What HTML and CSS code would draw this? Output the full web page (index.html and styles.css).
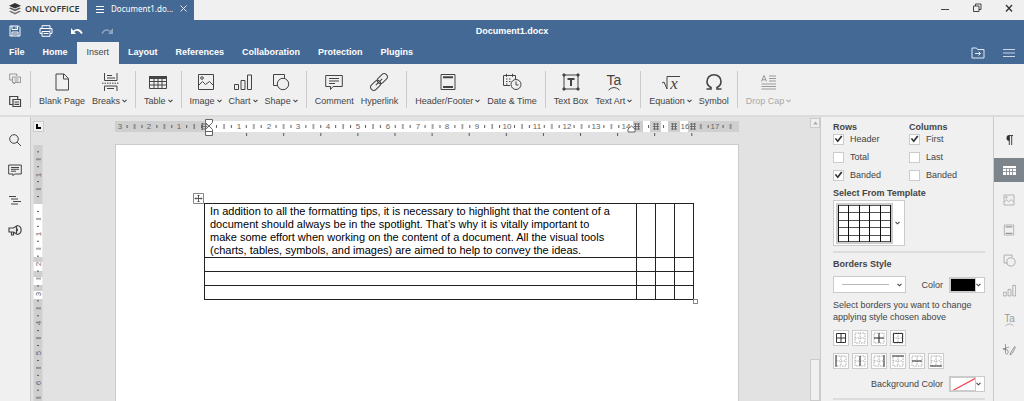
FILE: index.html
```html
<!DOCTYPE html>
<html lang="en">
<head>
    <meta charset="utf-8">
    <title>Document1.docx - ONLYOFFICE</title>
    <link rel="stylesheet" href="styles.css">
</head>
<body>

    <!-- Shared icons -->
    <svg class="sprite" aria-hidden="true">
        <symbol id="chevron" viewBox="0 0 5 4"><path d="M.5.8 2.5 2.8 4.5.8" fill="none" stroke="currentColor" stroke-width="1.1"/></symbol>
        <symbol id="i-image" viewBox="0 0 18 18"><path d="M1.500 1.500h15v15h-15z M1.500 12.500l4-4 3 3 4-3 4 4"/><circle cx="5" cy="5" r="1.300"/></symbol>
        <symbol id="i-chart" viewBox="0 0 18 18"><path d="M.5 11.500h4v5h-4zM7 7.500h4v9H7zM13.500 2h4v14.500h-4z"/></symbol>
        <symbol id="i-shape" viewBox="0 0 18 18"><path d="M6 12.500H1.500v-11h11V5"/><circle cx="11" cy="11" r="5.700"/></symbol>
        <symbol id="i-header" viewBox="0 0 18 18"><path d="M2 1.500h14v15H2z"/><path d="M4 4.200h10M4 14h10" stroke-width="2"/></symbol>
        <symbol id="i-textart" viewBox="0 0 18 18"><text x="9" y="12" text-anchor="middle">Ta</text><path d="M3.500 17q5.500-5 11 0"/></symbol>
        <symbol id="i-comment" viewBox="0 0 18 18"><path d="M.7 2.500h16.600v11H8l-2.500 3v-3H.7zM4 5.500h10M4 8h10M4 10.500h6"/></symbol>
        <symbol id="b-cell" viewBox="0 0 12 12"><path d="M1 1h10v10H1zM6 1v10M1 6h10" fill="none" stroke="#aaa" stroke-dasharray="1.500 1"/></symbol>
    </svg>

    <header>
        <div class="titlebar">
            <div class="brand">
                <svg width="12" height="12" viewBox="0 0 12 12"><path d="M6 0 12 2.800 6 5.600 0 2.800z" fill="#333"/><path d="m0 5.300 1.800-.9L6 6.400l4.200-2 1.800.9-6 2.900z" fill="#555"/><path d="m0 8.600 1.800-.9L6 9.700l4.200-2 1.800.9-6 2.900z" fill="#777"/></svg>
                ONLYOFFICE
            </div>
            <div class="doc-tab">
                <svg width="8" height="8" viewBox="0 0 8 8"><path d="M0 1.500h8M0 4.500h8M0 7.500h8" stroke="#fff"/></svg>
                <span>Document1.do...</span>
                <button aria-label="Close tab"><svg width="7" height="7" viewBox="0 0 7 7"><path d="m.5.5 6 6m0-6-6 6" stroke="#dde5ee"/></svg></button>
            </div>
            <div class="window-buttons">
                <button aria-label="Minimize"><svg width="10" height="10" viewBox="0 0 10 10"><path d="M1 6.500h8" stroke="#444"/></svg></button>
                <button aria-label="Restore"><svg width="10" height="10" viewBox="0 0 10 10"><path d="M1.500 3h5.500v5.500H1.500zM3.500 3V1H9v5.500H7" fill="none" stroke="#444"/></svg></button>
                <button aria-label="Close"><svg width="10" height="10" viewBox="0 0 10 10"><path d="m2 2 6 6.500m0-6.500L2 8.500" stroke="#333" stroke-width="1.300"/></svg></button>
            </div>
        </div>

        <div class="quickbar">
            <button aria-label="Save"><svg width="12" height="12" viewBox="0 0 12 12"><path d="M1 1h8.500L11 2.500V11H1zM3 1v3.500h5.500V1M3 11V7h6v4M7 2v1.500M4 9h4" fill="none" stroke="#fff"/></svg></button>
            <button aria-label="Print"><svg width="14" height="12" viewBox="0 0 14 12"><path d="M3 3.500V.7h8v2.800M3 8.500H1v-5h12v5h-2M3 6.500h8v4.800H3zM4.500 8.500h5M10.500 5h1" fill="none" stroke="#fff"/></svg></button>
            <button aria-label="Undo"><svg width="12" height="8" viewBox="0 0 12 8"><path d="M0 1v6h5z" fill="#fff"/><path d="M2.500 4.500q5-4 8.500 2" fill="none" stroke="#fff" stroke-width="1.800"/></svg></button>
            <button aria-label="Redo" disabled><svg width="12" height="8" viewBox="0 0 12 8"><path d="M12 1v6H7z" fill="#8fa5bf"/><path d="M9.500 4.500Q4.500.5 1 6.500" fill="none" stroke="#8fa5bf" stroke-width="1.500"/></svg></button>
            <h1>Document1.docx</h1>
        </div>

        <nav class="menu">
            <a href="#">File</a>
            <a href="#">Home</a>
            <a href="#" class="active">Insert</a>
            <a href="#">Layout</a>
            <a href="#">References</a>
            <a href="#">Collaboration</a>
            <a href="#">Protection</a>
            <a href="#">Plugins</a>
            <div class="menu-right">
                <button aria-label="Open file location"><svg width="14" height="12" viewBox="0 0 14 12"><path d="M1 11V1h4.500l1 1.500H13V11zM4 6.500h5.500M7.500 4.500l2 2-2 2" fill="none" stroke="#e4eaf1"/></svg></button>
                <button aria-label="View settings"><svg width="12" height="8" viewBox="0 0 12 8"><path d="M0 .5h12M0 4h12M0 7.500h12" stroke="#ccd7e3"/></svg></button>
            </div>
        </nav>
    </header>

    <div class="toolbar">
        <div class="group clipboard">
            <button aria-label="Copy" class="off"><svg class="icon" width="12" height="12" viewBox="0 0 12 12"><path d="M3 7H.7V1h7v2M3.500 4h8v5.500H6l-1 1.500V9.500H3.500zM5.500 6h4M5.500 8h4"/></svg></button>
            <button aria-label="Paste"><svg class="icon" width="12" height="12" viewBox="0 0 12 12"><path d="M3.500 9.500H.7v-8h8V4M3 1.500h3.500M4 4.500h7.500v7H4zM5.500 7H10M5.500 9.300H10" stroke-width="1.200"/></svg></button>
        </div>
        <div class="group">
            <button><svg class="icon" width="18" height="18" viewBox="0 0 18 18"><path d="M3 1h8l4.500 4.500V17H3zM10.500 1v5h5"/></svg><span>Blank Page</span></button>
            <button><svg class="icon" width="18" height="18" viewBox="0 0 18 18"><path d="M3.500 0v7.500H16V0M6 2.500h5M6 5h8M3.500 18v-5H16v5M6 15.500h7"/><path d="M1 10.200h17" stroke-dasharray="1.500 1"/></svg><span>Breaks<svg class="chev"><use href="#chevron"/></svg></span></button>
        </div>
        <div class="group">
            <button><svg class="icon" width="18" height="18" viewBox="0 0 18 18"><path d="M.5 3.500h17v12H.5zM.5 8.500h17M.5 12h17M5 5v10.500M9 5v10.500M13 5v10.500"/><path d="M0 4.500h18" stroke-width="3"/></svg><span>Table<svg class="chev"><use href="#chevron"/></svg></span></button>
        </div>
        <div class="group">
            <button><svg class="icon" width="18" height="18"><use href="#i-image"/></svg><span>Image<svg class="chev"><use href="#chevron"/></svg></span></button>
            <button><svg class="icon" width="18" height="18"><use href="#i-chart"/></svg><span>Chart<svg class="chev"><use href="#chevron"/></svg></span></button>
            <button><svg class="icon" width="18" height="18"><use href="#i-shape"/></svg><span>Shape<svg class="chev"><use href="#chevron"/></svg></span></button>
        </div>
        <div class="group">
            <button><svg class="icon" width="18" height="18"><use href="#i-comment"/></svg><span>Comment</span></button>
            <button><svg class="icon" width="18" height="18" viewBox="0 0 18 18"><g transform="rotate(-45 9 9)"><rect x="-1.500" y="5.800" width="11.500" height="6.400" rx="3.200"/><rect x="8" y="5.800" width="11.500" height="6.400" rx="3.200"/><path d="M4.500 9h9"/></g></svg><span>Hyperlink</span></button>
        </div>
        <div class="group">
            <button><svg class="icon" width="18" height="18"><use href="#i-header"/></svg><span>Header/Footer<svg class="chev"><use href="#chevron"/></svg></span></button>
            <button><svg class="icon" width="20" height="18" viewBox="0 0 20 18"><path d="M8 12.500H1.500v-10h12V6M4.500.8v3M10.500.8v3M4 6h1.500M7 6h1.500M4 8.500h1.500M7 8.500h1.500M4 11h1.500"/><circle cx="14" cy="11.500" r="5"/><path d="M14 8.500v3.500h2.500"/></svg><span>Date &amp; Time</span></button>
        </div>
        <div class="group">
            <button><svg class="icon" width="18" height="18" viewBox="0 0 18 18"><path d="M2 2h14v14H2z"/><path d="M5.500 6h7M9 5.500V13" stroke-width="2"/><path d="M1 1h2v2H1zM15 1h2v2h-2zM1 15h2v2H1zM15 15h2v2h-2z" fill="#444"/></svg><span>Text Box</span></button>
            <button><svg class="icon" width="18" height="18"><use href="#i-textart"/></svg><span>Text Art<svg class="chev"><use href="#chevron"/></svg></span></button>
        </div>
        <div class="group">
            <button><svg class="icon" width="18" height="18" viewBox="0 0 18 18"><path d="M0 10l2-1 3 7V3.500h13"/><text class="math" x="12" y="16" text-anchor="middle">x</text></svg><span>Equation<svg class="chev"><use href="#chevron"/></svg></span></button>
            <button><svg class="icon" width="18" height="18" viewBox="0 0 18 18"><path d="M1.500 16H6v-1.500C3 13 2 11 2 8.500 2 4.500 5 1.800 9 1.800s7 2.700 7 6.700c0 2.500-1 4.500-4 6V16h4.500" stroke-width="1.600"/></svg><span>Symbol</span></button>
        </div>
        <div class="group">
            <button class="off" disabled><svg class="icon" width="18" height="18" viewBox="0 0 18 18"><path d="M1.500 8.500 4 2.500l2.500 6M2.500 6.800h3M9 3h7M9 5.500h7M9 8h7M1.500 11h14.500M1.500 13.500h14.500M1.500 16h14.500"/></svg><span>Drop Cap<svg class="chev"><use href="#chevron"/></svg></span></button>
        </div>
    </div>

    <main>
        <aside class="leftbar">
            <button aria-label="Find"><svg class="icon" width="14" height="14" viewBox="0 0 14 14"><circle cx="6" cy="6" r="4.300"/><path d="m9 9 4 4"/></svg></button>
            <button aria-label="Comments"><svg class="icon" width="14" height="14" viewBox="0 0 14 14"><path d="M.7 2h12.600v9H6.500L5 12.700V11H.7zM3 4.500h8M3 6.300h8M3 8.200h5"/></svg></button>
            <button aria-label="Headings"><svg class="icon" width="14" height="14" viewBox="0 0 14 14"><path d="M1 3.500h7M3 6h7M5 8.500h8M3 11h7"/></svg></button>
            <button aria-label="Feedback"><svg class="icon" width="14" height="14" viewBox="0 0 14 14"><path d="M1 5h4.500l3-2v8l-3-2H1zM3.500 9v3h2V9M8.500 5.500q2 1.500 0 3M9 2.500c5.500.5 5.500 8.500 0 9" stroke-width="1.200"/></svg></button>
        </aside>

        <section class="editor">
            <button class="tab-stop" aria-label="Tab stop"><svg width="5" height="5" viewBox="0 0 5 5"><path d="M1 0v4h4" fill="none" stroke="#000" stroke-width="2"/></svg></button>

            <div class="hruler">
                <svg width="624" height="27" viewBox="0 0 624 27">
                    <defs>
                        <pattern id="cm" x="94" width="29.800" height="27" patternUnits="userSpaceOnUse">
                            <path d="M7.500 8v3M15 7v5M22.400 8v3" stroke="#555"/>
                        </pattern>
                        <pattern id="stops" x="94" width="37.100" height="27" patternUnits="userSpaceOnUse">
                            <path d="M.5 16v3" stroke="#555"/>
                        </pattern>
                        <g id="colmark"><path d="M-3 7h6M-3 9.500h6M-3 12h6M-1.500 6v7M1.500 6v7" stroke="#666" stroke-width=".9"/></g>
                    </defs>
                    <path d="M0 4h624v11H0z" fill="#cfcfcf"/>
                    <path d="M94 4h424v11H94zM528 4h7v11h-7zM546 4h7v11h-7zM565 4h8v11h-8z" fill="#fff"/>
                    <path d="M10 0h505v27H10zM527 0h8v27h-8zM546 0h6v27h-6zM584 0h34v27h-34z" fill="url(#cm)"/>
                    <path d="M130 15h450v6H130z" fill="url(#stops)"/>
                    <g class="ruler-text">
                        <text x="5" y="12">3</text><text x="34" y="12">2</text><text x="64" y="12">1</text>
                        <text x="124" y="12">1</text><text x="154" y="12">2</text><text x="183" y="12">3</text><text x="213" y="12">4</text>
                        <text x="243" y="12">5</text><text x="273" y="12">6</text><text x="303" y="12">7</text><text x="332" y="12">8</text>
                        <text x="362" y="12">9</text><text x="392" y="12">10</text><text x="422" y="12">11</text><text x="452" y="12">12</text>
                        <text x="481" y="12">13</text><text x="511" y="12">14</text><text x="570" y="12">16</text><text x="600" y="12">17</text>
                    </g>
                    <use href="#colmark" x="89"/><use href="#colmark" x="522"/><use href="#colmark" x="541"/><use href="#colmark" x="559"/><use href="#colmark" x="578"/>
                    <path d="M90.500 2.500h7v3L94 9l-3.500-3.500zM90.500 18.500v-6L94 9l3.500 3.500v6zM90.500 14.500h7" fill="#fff" stroke="#666"/>
                    <path d="M513 15v-3l3.500-3 3.500 3v3z" fill="#fff" stroke="#666"/>
                </svg>
            </div>

            <div class="vruler">
                <svg width="11" height="330" viewBox="0 0 11 330">
                    <defs>
                        <pattern id="cmv" y="59" width="11" height="29.800" patternUnits="userSpaceOnUse">
                            <path d="M4 7.500h2M3 15h5M4 22.400h2" stroke="#555"/>
                        </pattern>
                    </defs>
                    <path d="M.5 0h9v330h-9z" fill="#cfcfcf"/>
                    <path d="M.5 59h9v53h-9zM.5 117h9v9h-9zM.5 132h9v8h-9zM.5 146h9v8h-9z" fill="#fff"/>
                    <path d="M0 2h11v328H0z" fill="url(#cmv)"/>
                    <g class="ruler-text">
                        <text transform="translate(8 30) rotate(-90)">1</text>
                        <text transform="translate(8 89) rotate(-90)">1</text>
                        <text transform="translate(8 119) rotate(-90)">2</text>
                        <text transform="translate(8 149) rotate(-90)">3</text>
                        <text transform="translate(8 178) rotate(-90)">4</text>
                        <text transform="translate(8 208) rotate(-90)">5</text>
                        <text transform="translate(8 238) rotate(-90)">6</text>
                    </g>
                </svg>
            </div>

            <div class="canvas">
                <article class="page">
                    <div class="table-wrap">
                        <svg class="move-handle" width="11" height="11" viewBox="0 0 11 11"><path d="M.5.5h10v10H.5z" fill="#fff" stroke="#888"/><path d="M5.500 2v7M2 5.500h7M4.500 3l1-1 1 1M4.500 8l1 1 1-1M3 4.500l-1 1 1 1M8 4.500l1 1-1 1" fill="none" stroke="#333" stroke-width=".8"/></svg>
                        <table>
                            <colgroup><col><col class="narrow"><col class="narrow"><col class="narrow"></colgroup>
                            <tr>
                                <td>In addition to all the formatting tips, it is necessary to highlight that the content of a<br>document should always be in the spotlight. That’s why it is vitally important to<br>make some effort when working on the content of a document. All the visual tools<br>(charts, tables, symbols, and images) are aimed to help to convey the ideas.</td>
                                <td></td><td></td><td></td>
                            </tr>
                            <tr><td></td><td></td><td></td><td></td></tr>
                            <tr><td></td><td></td><td></td><td></td></tr>
                            <tr><td></td><td></td><td></td><td></td></tr>
                        </table>
                        <span class="resize-handle"></span>
                    </div>
                </article>
            </div>

            <div class="scrollbar">
                <button aria-label="Scroll up"><svg width="5" height="4" viewBox="0 0 5 4"><path d="M0 3.500 2.500.5 5 3.500z" fill="#aaa"/></svg></button>
                <span class="thumb"></span>
            </div>
        </section>

        <aside class="settings">
            <div class="checks">
                <fieldset>
                    <legend>Rows</legend>
                    <label><input type="checkbox" checked>Header</label>
                    <label><input type="checkbox">Total</label>
                    <label><input type="checkbox" checked>Banded</label>
                </fieldset>
                <fieldset>
                    <legend>Columns</legend>
                    <label><input type="checkbox" checked>First</label>
                    <label><input type="checkbox">Last</label>
                    <label><input type="checkbox">Banded</label>
                </fieldset>
            </div>

            <h2>Select From Template</h2>
            <button class="template" aria-label="Table template">
                <svg width="57" height="41" viewBox="0 0 57 41"><path d="M0 0h57v41H0z" fill="#ccc"/><path d="M2.500 2.500h52v36h-52z" fill="#fff"/><path d="M2 2.500h53M2 9.500h53M2 17.500h53M2 24.500h53M2 32.500h53M2 38.500h53" stroke="#555"/><path d="M2.500 2v37M12.500 2v37M23.500 2v37M33.500 2v37M44.500 2v37M54.500 2v37" stroke="#111"/></svg>
                <svg class="chev"><use href="#chevron"/></svg>
            </button>
            <hr>

            <h2>Borders Style</h2>
            <div class="line-row">
                <div class="select">
                    <select aria-label="Border width"><option></option></select>
                    <svg class="chev"><use href="#chevron"/></svg>
                </div>
                <label for="border-color">Color</label>
                <button class="color" id="border-color"><span class="swatch black"></span><svg class="chev"><use href="#chevron"/></svg></button>
            </div>
            <p>Select borders you want to change<br>applying style chosen above</p>

            <div class="borders">
                <button aria-label="All borders"><svg viewBox="0 0 12 12"><path d="M1.500 1.500h9v9h-9zM6 1v10M1 6h10"/></svg></button>
                <button aria-label="No borders"><svg viewBox="0 0 12 12"><use href="#b-cell"/></svg></button>
                <button aria-label="Inner borders"><svg viewBox="0 0 12 12"><use href="#b-cell"/><path d="M6 1v10M1 6h10"/></svg></button>
                <button aria-label="Outer borders"><svg viewBox="0 0 12 12"><use href="#b-cell"/><path d="M1.500 1.500h9v9h-9z"/></svg></button>
            </div>
            <div class="borders">
                <button aria-label="Left border"><svg viewBox="0 0 12 12"><use href="#b-cell"/><path d="M1 0v12"/></svg></button>
                <button aria-label="Vertical borders"><svg viewBox="0 0 12 12"><use href="#b-cell"/><path d="M6 1v10"/></svg></button>
                <button aria-label="Right border"><svg viewBox="0 0 12 12"><use href="#b-cell"/><path d="M11 0v12"/></svg></button>
                <button aria-label="Top border"><svg viewBox="0 0 12 12"><use href="#b-cell"/><path d="M0 1h12"/></svg></button>
                <button aria-label="Horizontal borders"><svg viewBox="0 0 12 12"><use href="#b-cell"/><path d="M1 6h10"/></svg></button>
                <button aria-label="Bottom border"><svg viewBox="0 0 12 12"><use href="#b-cell"/><path d="M0 11h12"/></svg></button>
            </div>

            <div class="line-row">
                <label for="back-color">Background Color</label>
                <button class="color" id="back-color"><span class="swatch"><svg width="24" height="14" viewBox="0 0 24 14"><path d="M0 13.500 24 .5" stroke="#f2444d" stroke-width="1.200"/></svg></span><svg class="chev"><use href="#chevron"/></svg></button>
            </div>
            <hr>
        </aside>

        <aside class="rightbar">
            <button aria-label="Paragraph settings"><svg class="icon" width="12" height="14" viewBox="0 0 12 14"><path d="M6 2.500h4M6.300 2.500V12M8.700 2.500V12"/><path d="M6.500 2a3 3 0 0 0 0 6z" fill="#333" stroke="none"/></svg></button>
            <button class="active" aria-label="Table settings"><svg width="13" height="9" viewBox="0 0 13 9"><path d="M0 0h13v9H0z" fill="#fff"/><path d="M0 2.500h13M0 5.500h13M3.500 2.500V9M6.500 2.500V9M9.500 2.500V9" stroke="#7d858c" stroke-width=".8"/></svg></button>
            <button class="off" aria-label="Image settings"><svg class="icon" width="12" height="12"><use href="#i-image"/></svg></button>
            <button class="off" aria-label="Header and footer settings"><svg class="icon" width="12" height="14"><use href="#i-header"/></svg></button>
            <button class="off" aria-label="Shape settings"><svg class="icon" width="13" height="13"><use href="#i-shape"/></svg></button>
            <button class="off" aria-label="Chart settings"><svg class="icon" width="13" height="13"><use href="#i-chart"/></svg></button>
            <button class="off" aria-label="Text Art settings"><svg class="icon" width="13" height="14"><use href="#i-textart"/></svg></button>
            <button class="off" aria-label="Signature settings"><svg class="icon" width="14" height="14" viewBox="0 0 14 14"><path d="M3.500 1v8.500c0 3 3.500 1.500 2.500-1.500S1.500 8 1 5.500M1 6l6-2M8 12l1-3 4-6M8 12l2.500-2 3-6"/></svg></button>
        </aside>
    </main>

</body>
</html>
```
FILE: styles.css
```css
* {
    box-sizing: border-box;
}

html, body {
    height: 100%;
    margin: 0;
}

body {
    display: flex;
    flex-direction: column;
    overflow: hidden;
    font: 9px/12px "Liberation Sans", Arial, sans-serif;
    color: #444;
    background: #f0f0f0;
}

button {
    display: flex;
    align-items: center;
    justify-content: center;
    margin: 0;
    padding: 0;
    border: 0;
    background: none;
    font: inherit;
    color: inherit;
}

svg {
    flex: none;
    display: block;
}

.sprite {
    display: none;
}

.icon {
    fill: none;
    stroke: #444;
    overflow: visible;
}

.icon text, symbol text {
    fill: #444;
    stroke: none;
    font-size: 14px;
}

.icon .math {
    font: italic 17px "Liberation Serif", serif;
}

.off {
    color: #aaa;
}

.off .icon {
    opacity: 0.5;
}

.chev {
    width: 5px;
    height: 4px;
    color: #444;
}

.off .chev {
    color: #aaa;
}

/* Window title and tabs */
.titlebar {
    display: flex;
    height: 20px;
}

.brand {
    display: flex;
    align-items: center;
    gap: 4px;
    width: 87px;
    padding: 0 0 3px 9px;
    font: 600 9px/12px "Open Sans", sans-serif;
    color: #333;
}

.doc-tab {
    display: flex;
    align-items: center;
    gap: 7px;
    width: 107px;
    padding: 0 7px 3px 9px;
    background: #446995;
    color: #fff;
    font: 8px/12px "Noto Sans", sans-serif;
}

.doc-tab span {
    flex: 1;
}

.window-buttons {
    display: flex;
    gap: 22px;
    margin-left: auto;
    padding: 0 10px 4px 0;
}

.quickbar {
    position: relative;
    display: flex;
    align-items: center;
    gap: 18px;
    height: 22px;
    padding-left: 9px;
    background: #446995;
}

.quickbar h1 {
    position: absolute;
    left: 0;
    right: 0;
    margin: 0;
    text-align: center;
    font: bold 9px/12px "Liberation Sans", Arial, sans-serif;
    color: #fff;
    pointer-events: none;
}

.menu {
    display: flex;
    height: 22px;
    background: #446995;
}

.menu a {
    padding: 0 9px;
    font-weight: bold;
    line-height: 21px;
    color: #fff;
    text-decoration: none;
}

.menu .active {
    background: #f0f0f0;
    color: #444;
    font-weight: normal;
    padding: 0 10px;
}

.menu-right {
    display: flex;
    gap: 18px;
    margin-left: auto;
    padding-right: 9px;
}

/* Ribbon */
.toolbar {
    display: flex;
    align-items: center;
    height: 53px;
    border-bottom: 2px solid #dcdcdc;
}

.group {
    display: flex;
    gap: 7px;
    height: 37px;
    padding: 0 8px;
    border-right: 1px solid #cbcbcb;
}

.group:last-child {
    border-right: 0;
}

.group button {
    flex-direction: column;
    justify-content: space-between;
    padding: 2px 0 1px;
}

.group button span {
    display: flex;
    align-items: center;
    gap: 2px;
}

.clipboard {
    flex-direction: column;
    justify-content: space-between;
    padding: 0 9px;
}

main {
    flex: 1;
    display: flex;
    min-height: 0;
}

.leftbar {
    display: flex;
    flex-direction: column;
    gap: 16px;
    width: 31px;
    padding: 16px 0 0;
    border-right: 1px solid #cbcbcb;
    align-items: center;
}

/* Document area with rulers */
.editor {
    flex: 1;
    display: grid;
    grid-template-columns: 13px 1fr 10px;
    grid-template-rows: 27px 1fr;
    min-width: 0;
    background: #e2e2e2;
}

.tab-stop {
    width: 11px;
    height: 11px;
    margin: 4px 0 0 2px;
    border: 1px solid #cbcbcb;
    background: #f0f0f0;
}

.hruler {
    display: flex;
    justify-content: center;
    overflow: hidden;
}

.ruler-text {
    font-size: 8px;
    fill: #666;
    text-anchor: middle;
}

.vruler {
    grid-row: 2;
    grid-column: 1;
    padding: 1px 0 0 2px;
    overflow: hidden;
}

.canvas {
    display: flex;
    justify-content: center;
    overflow: hidden;
}

.page {
    width: 624px;
    border: 1px solid #cbcbcb;
    border-bottom: 0;
    padding: 58px 44px 0 88px;
    background: #fff;
}

.table-wrap {
    position: relative;
    width: 490px;
}

.page table {
    width: 100%;
    table-layout: fixed;
    border-collapse: collapse;
    font-size: 11px;
    line-height: 13px;
    color: #000;
}

.page td {
    height: 14px;
    padding: 1px 0 0 5px;
    border: 1px solid #222;
    white-space: nowrap;
}

.narrow {
    width: 19px;
}

.move-handle {
    position: absolute;
    top: -10px;
    left: -11px;
}

.resize-handle {
    position: absolute;
    right: -4px;
    bottom: -4px;
    width: 5px;
    height: 5px;
    border: 1px solid #888;
    background: #fff;
}

.scrollbar {
    grid-row: 1 / 3;
    grid-column: 3;
    display: flex;
    flex-direction: column;
    justify-content: space-between;
}

.scrollbar button {
    height: 10px;
    margin-top: 1px;
    border: 1px solid #cbcbcb;
    background: #f0f0f0;
}

.thumb {
    height: 42px;
    border: 1px solid #cbcbcb;
    background: #f0f0f0;
}

/* Table settings */
.settings {
    width: 174px;
    padding: 4px 8px 0 12px;
    border-left: 1px solid #cbcbcb;
    border-right: 1px solid #cbcbcb;
    overflow: hidden;
}

.checks {
    display: flex;
}

fieldset {
    width: 76px;
    margin: 0;
    padding: 0;
    border: 0;
}

legend, h2 {
    margin: 0;
    padding: 0;
    font: bold 9px/12px "Liberation Sans", Arial, sans-serif;
}

fieldset label {
    display: flex;
    align-items: center;
    gap: 6px;
    height: 12px;
    margin-bottom: 6px;
}

input[type="checkbox"] {
    appearance: none;
    width: 11px;
    height: 11px;
    margin: 0;
    border: 1px solid #cbcbcb;
    background: #fff;
}

input[type="checkbox"]:checked::before {
    content: "";
    display: block;
    width: 9px;
    height: 9px;
    background: #333;
    clip-path: polygon(8% 48%, 24% 38%, 40% 60%, 78% 10%, 94% 22%, 42% 88%);
}

.template {
    justify-content: space-between;
    width: 72px;
    height: 46px;
    margin: 1px 0 5px;
    padding: 0 4px 0 2px;
    border: 1px solid #cbcbcb;
    background: #fff;
}

hr {
    margin: 0 0 5px;
    border: 0;
    border-top: 2px solid #dcdcdc;
}

.line-row {
    display: flex;
    align-items: center;
    justify-content: flex-end;
    gap: 6px;
}

h2 + .line-row {
    margin-top: 6px;
}

.select {
    position: relative;
    margin-right: auto;
}

.select select {
    appearance: none;
    display: block;
    width: 73px;
    height: 17px;
    border: 1px solid #cbcbcb;
    background: linear-gradient(#bbb, #bbb) 8px 7px / 47px 1px no-repeat #fff;
}

.select .chev {
    position: absolute;
    top: 7px;
    right: 4px;
}

.color {
    justify-content: space-between;
    width: 36px;
    height: 16px;
    padding-right: 3px;
    border: 1px solid #cbcbcb;
    background: #fff;
}

.swatch {
    width: 26px;
    height: 14px;
    border: 1px solid #cbcbcb;
    overflow: hidden;
}

.black {
    background: #000;
}

.settings p {
    margin: 6px 0 7px;
}

.borders {
    display: flex;
    gap: 3px;
    margin-bottom: 7px;
}

.borders button {
    width: 16px;
    height: 16px;
    border: 1px solid #cbcbcb;
    background: #fff;
}

.borders svg {
    width: 12px;
    height: 12px;
    fill: none;
    stroke: #333;
}

.borders + .line-row {
    margin-bottom: 6px;
}

.rightbar {
    width: 30px;
    padding-top: 11px;
}

.rightbar button {
    width: 100%;
    height: 24px;
    margin-bottom: 6px;
}

.rightbar .active {
    background: #7d858c;
}
```
